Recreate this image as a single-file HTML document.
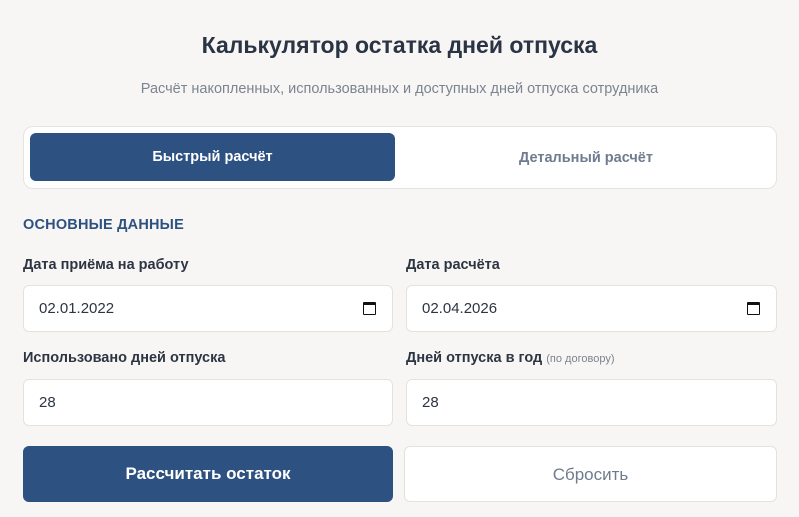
<!DOCTYPE html>
<html><head><meta charset="utf-8"><style>
*{box-sizing:border-box;margin:0;padding:0}
body{width:799px;height:517px;overflow:hidden;background:#f7f6f4;font-family:"Liberation Sans","DejaVu Sans",sans-serif;position:relative;color:#2d3748}
.a{position:absolute}
h1{position:absolute;left:0;width:799px;top:32px;text-align:center;font-size:23px;font-weight:bold;color:#2a3444}
.sub{left:0;width:799px;top:81px;text-align:center;font-size:14.5px;color:#7b8491}
.tabs{left:23px;top:126px;width:754px;height:63px;background:#fff;border:1px solid #e6e4e0;border-radius:10px}
.act{left:30px;top:133px;width:365px;height:48px;background:#2d5180;border-radius:6px;color:#fff;font-weight:bold;font-size:14.5px;line-height:48px;text-align:center}
.ina{left:400px;top:134px;width:372px;height:48px;line-height:48px;text-align:center;color:#6f7b8e;font-weight:bold;font-size:14.5px}
.sec{left:23px;top:217px;font-size:14.5px;color:#2d5180;font-weight:bold;letter-spacing:.2px}
.lbl{font-size:14.5px;font-weight:bold;color:#2d3442}
.lbl small{font-weight:normal;font-size:11px;color:#7b8491}
.in{background:#fff;border:1px solid #e4e2de;border-radius:6px;height:47px;font-size:15px;line-height:46px;padding-left:15px;color:#2d3442}
.cal{position:absolute;right:16px;top:16px;width:13px;height:13px;border:1.8px solid #111;border-top-width:3px;border-radius:1px}
.btn{top:446px;height:56px;border-radius:6px;font-size:17px;line-height:56px;text-align:center}
</style></head><body>
<h1>Калькулятор остатка дней отпуска</h1>
<div class="a sub">Расчёт накопленных, использованных и доступных дней отпуска сотрудника</div>
<div class="a tabs"></div>
<div class="a act">Быстрый расчёт</div>
<div class="a ina">Детальный расчёт</div>
<div class="a sec">ОСНОВНЫЕ ДАННЫЕ</div>
<div class="a lbl" style="left:23px;top:257px">Дата приёма на работу</div>
<div class="a lbl" style="left:406px;top:257px">Дата расчёта</div>
<div class="a in" style="left:23px;top:285px;width:370px">02.01.2022<span class="cal"></span></div>
<div class="a in" style="left:406px;top:285px;width:371px">02.04.2026<span class="cal"></span></div>
<div class="a lbl" style="left:23px;top:350px">Использовано дней отпуска</div>
<div class="a lbl" style="left:406px;top:350px">Дней отпуска в год <small>(по договору)</small></div>
<div class="a in" style="left:23px;top:379px;width:370px">28</div>
<div class="a in" style="left:406px;top:379px;width:371px">28</div>
<div class="a btn" style="left:23px;width:370px;background:#2d5180;color:#fff;font-weight:bold">Рассчитать остаток</div>
<div class="a btn" style="left:404px;width:373px;background:#fff;border:1px solid #e4e2de;color:#6f7b8e">Сбросить</div>
</body></html>
